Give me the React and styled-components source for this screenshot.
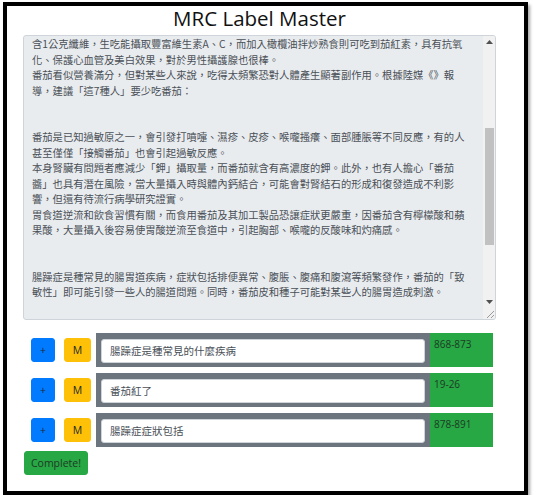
import React, { useLayoutEffect, useRef } from 'react';
import styled, { createGlobalStyle } from 'styled-components';

const GlobalStyle = createGlobalStyle`
  html, body {
    margin: 0;
    padding: 0;
    background: #fff;
  }
  body {
    font-family: "Open Sans", "Noto Sans CJK TC", sans-serif;
  }
`;

const Frame = styled.div`
  box-sizing: border-box;
  width: 525px;
  height: 493px;
  margin: 2px 0 0 3px;
  border: 4px solid #000;
  box-shadow: 2px 3px 3px rgba(0, 0, 0, 0.35);
  padding: 0 28px 0 16px;
  display: flex;
  flex-direction: column;
`;

const Title = styled.h1`
  margin: 0;
  font-family: "Open Sans", sans-serif;
  font-weight: 500;
  font-size: 20.5px;
  line-height: 25px;
  text-align: center;
  color: #111;
`;

const ArticleWrap = styled.div`
  position: relative;
  margin-top: 4px;
  width: 473px;
  height: 285px;
`;

const Article = styled.textarea`
  box-sizing: border-box;
  display: block;
  margin: 0;
  width: 100%;
  height: 100%;
  padding: 6px 20px 6px 8px;
  border: 1px solid #ced4da;
  border-radius: 3px;
  background: #e9ecef;
  color: #495057;
  font-family: "Noto Sans CJK TC", sans-serif;
  font-size: 10.3px;
  line-height: 15.5px;
  white-space: pre;
  overflow: hidden;
  resize: none;
  outline: none;
`;

/* the browser hides native scrollbars, so this one is painted over the textarea */
const ScrollBar = styled.div`
  position: absolute;
  top: 1px;
  right: 1px;
  width: 12px;
  height: 283px;
  display: flex;
  flex-direction: column;
  align-items: center;
  background: #f1f1f1;
  border-top-right-radius: 2px;
  border-bottom-right-radius: 2px;
`;

const Arrow = styled.div`
  height: 12px;
  width: 12px;
  display: flex;
  align-items: center;
  justify-content: center;
`;

const Thumb = styled.div`
  width: 9px;
  height: ${p => p.$h}px;
  margin-top: ${p => p.$top}px;
  margin-bottom: auto;
  background: #c1c1c1;
`;

const Resizer = styled.div`
  width: 12px;
  height: 11px;
  display: flex;
  align-items: flex-end;
  justify-content: flex-end;
`;

const Rows = styled.div`
  display: flex;
  flex-direction: column;
  gap: 6px;
  margin-top: 13px;
`;

const Row = styled.div`
  display: flex;
  align-items: center;
  height: 34px;
  padding-left: 8px;
`;

const SmallButton = styled.button`
  box-sizing: border-box;
  width: ${p => p.$w}px;
  height: 24px;
  margin-right: ${p => p.$gap}px;
  padding: 0;
  border: 1px solid ${p => p.$bg};
  border-radius: 3px;
  background: ${p => p.$bg};
  color: #212529;
  font-family: "Open Sans", sans-serif;
  font-size: 10.5px;
`;

const QuestionBox = styled.div`
  box-sizing: border-box;
  width: 334px;
  height: 34px;
  padding: 5px;
  background: #6c757d;
`;

const QuestionInput = styled.input`
  box-sizing: border-box;
  width: 100%;
  height: 24px;
  padding: 0 8px;
  border: 1px solid #ced4da;
  border-radius: 3px;
  background: #fff;
  color: #495057;
  font-family: "Noto Sans CJK TC", sans-serif;
  font-size: 10.5px;
  outline: none;
`;

const Span = styled.div`
  box-sizing: border-box;
  width: 63px;
  height: 34px;
  padding: 3px 4px;
  background: #28a745;
  color: #1d3a24;
  font-family: "Open Sans", sans-serif;
  font-size: 10px;
  line-height: 16px;
`;

const CompleteButton = styled.button`
  box-sizing: border-box;
  align-self: flex-start;
  width: 64px;
  height: 24px;
  margin: 4px 0 0 1px;
  padding: 0;
  border: 1px solid #28a745;
  border-radius: 3px;
  background: #28a745;
  color: #1d3a24;
  font-family: "Open Sans", sans-serif;
  font-size: 10.5px;
`;

const articleLines = [
  '含1公克纖維，生吃能攝取豐富維生素A、C，而加入橄欖油拌炒熟食則可吃到茄紅素，具有抗氧',
  '化、保護心血管及美白效果，對於男性攝護腺也很棒。',
  '番茄看似營養滿分，但對某些人來說，吃得太頻繁恐對人體產生顯著副作用。根據陸媒《》報',
  '導，建議「這7種人」要少吃番茄：',
  '',
  '',
  '番茄是已知過敏原之一，會引發打噴嚏、濕疹、皮疹、喉嚨搔癢、面部腫脹等不同反應，有的人',
  '甚至僅僅「接觸番茄」也會引起過敏反應。',
  '本身腎臟有問題者應減少「鉀」攝取量，而番茄就含有高濃度的鉀。此外，也有人擔心「番茄',
  '醬」也具有潛在風險，當大量攝入時與體內鈣結合，可能會對腎結石的形成和復發造成不利影',
  '響，但還有待流行病學研究證實。',
  '胃食道逆流和飲食習慣有關，而食用番茄及其加工製品恐讓症狀更嚴重，因番茄含有檸檬酸和蘋',
  '果酸，大量攝入後容易使胃酸逆流至食道中，引起胸部、喉嚨的反酸味和灼痛感。',
  '',
  '',
  '腸躁症是種常見的腸胃道疾病，症狀包括排便異常、腹脹、腹痛和腹瀉等頻繁發作，番茄的「致',
  '敏性」即可能引發一些人的腸道問題。同時，番茄皮和種子可能對某些人的腸胃造成刺激。',
];

const HIDDEN_BEFORE = 12;
const LINE_HEIGHT = 15.5;

const articleText = [
  ...Array(HIDDEN_BEFORE).fill(''),
  ...articleLines,
  ...Array(8).fill(''),
].join('\n');

const questions = [
  { text: '腸躁症是種常見的什麼疾病', span: '868-873' },
  { text: '番茄紅了', span: '19-26' },
  { text: '腸躁症症狀包括', span: '878-891' },
];

const App = () => {
  const articleRef = useRef(null);

  useLayoutEffect(() => {
    if (articleRef.current) {
      articleRef.current.scrollTop = 6 + HIDDEN_BEFORE * LINE_HEIGHT;
    }
  }, []);

  return (
    <>
      <GlobalStyle />
      <Frame>
        <Title>MRC Label Master</Title>
        <ArticleWrap>
          <Article ref={articleRef} readOnly value={articleText} />
          <ScrollBar>
            <Arrow>
              <svg width="7" height="4" viewBox="0 0 7 4">
                <path d="M0 4 L3.5 0 L7 4 Z" fill="#505050" />
              </svg>
            </Arrow>
            <Thumb $top={80} $h={117} />
            <Arrow>
              <svg width="7" height="4" viewBox="0 0 7 4">
                <path d="M0 0 L3.5 4 L7 0 Z" fill="#505050" />
              </svg>
            </Arrow>
            <Resizer>
              <svg width="9" height="9" viewBox="0 0 9 9">
                <path d="M1 8 L8 1 M5 8 L8 5" stroke="#9a9a9a" strokeWidth="1" />
              </svg>
            </Resizer>
          </ScrollBar>
        </ArticleWrap>
        <Rows>
          {questions.map(q => (
            <Row key={q.span}>
              <SmallButton $w={24} $gap={9} $bg="#007bff">+</SmallButton>
              <SmallButton $w={27} $gap={5} $bg="#ffc107">M</SmallButton>
              <QuestionBox>
                <QuestionInput readOnly value={q.text} />
              </QuestionBox>
              <Span>{q.span}</Span>
            </Row>
          ))}
        </Rows>
        <CompleteButton>Complete!</CompleteButton>
      </Frame>
    </>
  );
};

export default App;
